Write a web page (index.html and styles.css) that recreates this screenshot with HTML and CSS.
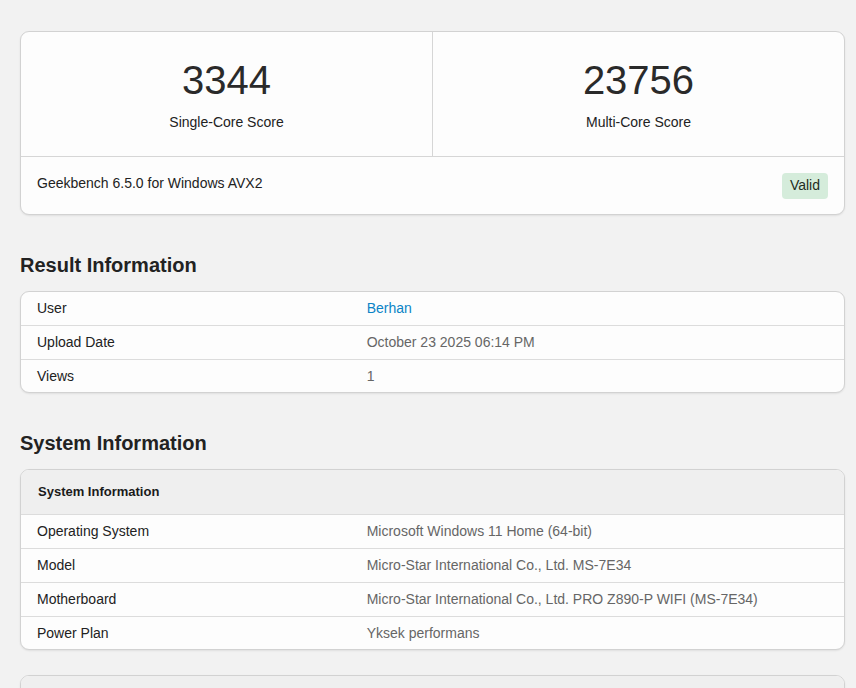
FILE: index.html
```html
<!DOCTYPE html>
<html lang="en">
 <head>
  <meta charset="UTF-8">
  <link rel="stylesheet" href="styles.css">
  <title>Geekbench Result</title>
 </head>
 <body>
  <div class="page">

   <div class="card">
    <div class="scores">
     <div class="score">
      <div class="score-num">3344</div>
      <div class="score-label">Single-Core Score</div>
     </div>
     <div class="score">
      <div class="score-num">23756</div>
      <div class="score-label">Multi-Core Score</div>
     </div>
    </div>
    <div class="card-foot">
     <span>Geekbench 6.5.0 for Windows AVX2</span>
     <span class="badge">Valid</span>
    </div>
   </div>

   <h2 class="section-title">Result Information</h2>
   <div class="card">
    <table class="info">
     <tr><td class="name">User</td><td class="value"><a href="#">Berhan</a></td></tr>
     <tr><td class="name">Upload Date</td><td class="value">October 23 2025 06:14 PM</td></tr>
     <tr><td class="name">Views</td><td class="value">1</td></tr>
    </table>
   </div>

   <h2 class="section-title">System Information</h2>
   <div class="card">
    <table class="info">
     <tr class="head"><th colspan="2">System Information</th></tr>
     <tr><td class="name">Operating System</td><td class="value">Microsoft Windows 11 Home (64-bit)</td></tr>
     <tr><td class="name">Model</td><td class="value">Micro-Star International Co., Ltd. MS-7E34</td></tr>
     <tr><td class="name">Motherboard</td><td class="value">Micro-Star International Co., Ltd. PRO Z890-P WIFI (MS-7E34)</td></tr>
     <tr><td class="name">Power Plan</td><td class="value">Yksek performans</td></tr>
    </table>
   </div>

   <div class="card next">
    <table class="info">
     <tr class="head"><th colspan="2">CPU Information</th></tr>
     <tr><td class="name">Name</td><td class="value">Intel Core Ultra 7 265K</td></tr>
    </table>
   </div>

  </div>
 </body>
</html>
```

FILE: styles.css
```css
*{margin:0;padding:0;box-sizing:border-box}
html{overflow:hidden}
body{
	background:#f2f2f2;
	font-family:"Liberation Sans",Arial,sans-serif;
	font-size:14px;
	color:#222;
}
.page{
	padding:31px 11px 0 20px;
}
.card{
	background:#fdfdfd;
	border:1px solid #d2d2d2;
	border-radius:9px;
	box-shadow:0 1px 2px rgba(0,0,0,0.08);
	overflow:hidden;
}
.card.next{
	margin-top:25px;
}

/* scores */
.scores{
	display:flex;
	border-bottom:1px solid #d6d6d6;
}
.score{
	flex:1;
	text-align:center;
	padding:24px 0;
}
.score + .score{
	border-left:1px solid #d6d6d6;
}
.score-num{
	font-size:40px;
	line-height:49px;
	color:#2a2a2a;
}
.score-label{
	margin-top:7px;
	line-height:20px;
}
.card-foot{
	display:flex;
	justify-content:space-between;
	align-items:flex-start;
	padding:16px 16px 15px;
	line-height:20px;
}
.badge{
	background:#d5ecdb;
	color:#1f2d22;
	border-radius:4px;
	padding:2px 8px 4px;
}

.section-title{
	font-size:20px;
	line-height:24px;
	font-weight:bold;
	color:#222;
	margin:38px 0 14px;
}

/* info tables */
.info{
	width:100%;
	border-collapse:collapse;
}
.info td{
	height:34px;
	padding:0 16px;
	border-top:1px solid #dcdcdc;
	line-height:20px;
}
.info tr:first-child td,
.info tr:last-child td{
	height:33px;
}
.info tr:first-child td{
	border-top:none;
}
.info td.name{
	width:42%;
}
.info td.value{
	color:#666;
	padding-left:0;
}
.info a{
	color:#0b84c6;
	text-decoration:none;
}
.info .head th{
	background:#efefef;
	text-align:left;
	font-size:13px;
	font-weight:bold;
	height:44px;
	padding:0 17px;
	color:#1a1a1a;
}
```
